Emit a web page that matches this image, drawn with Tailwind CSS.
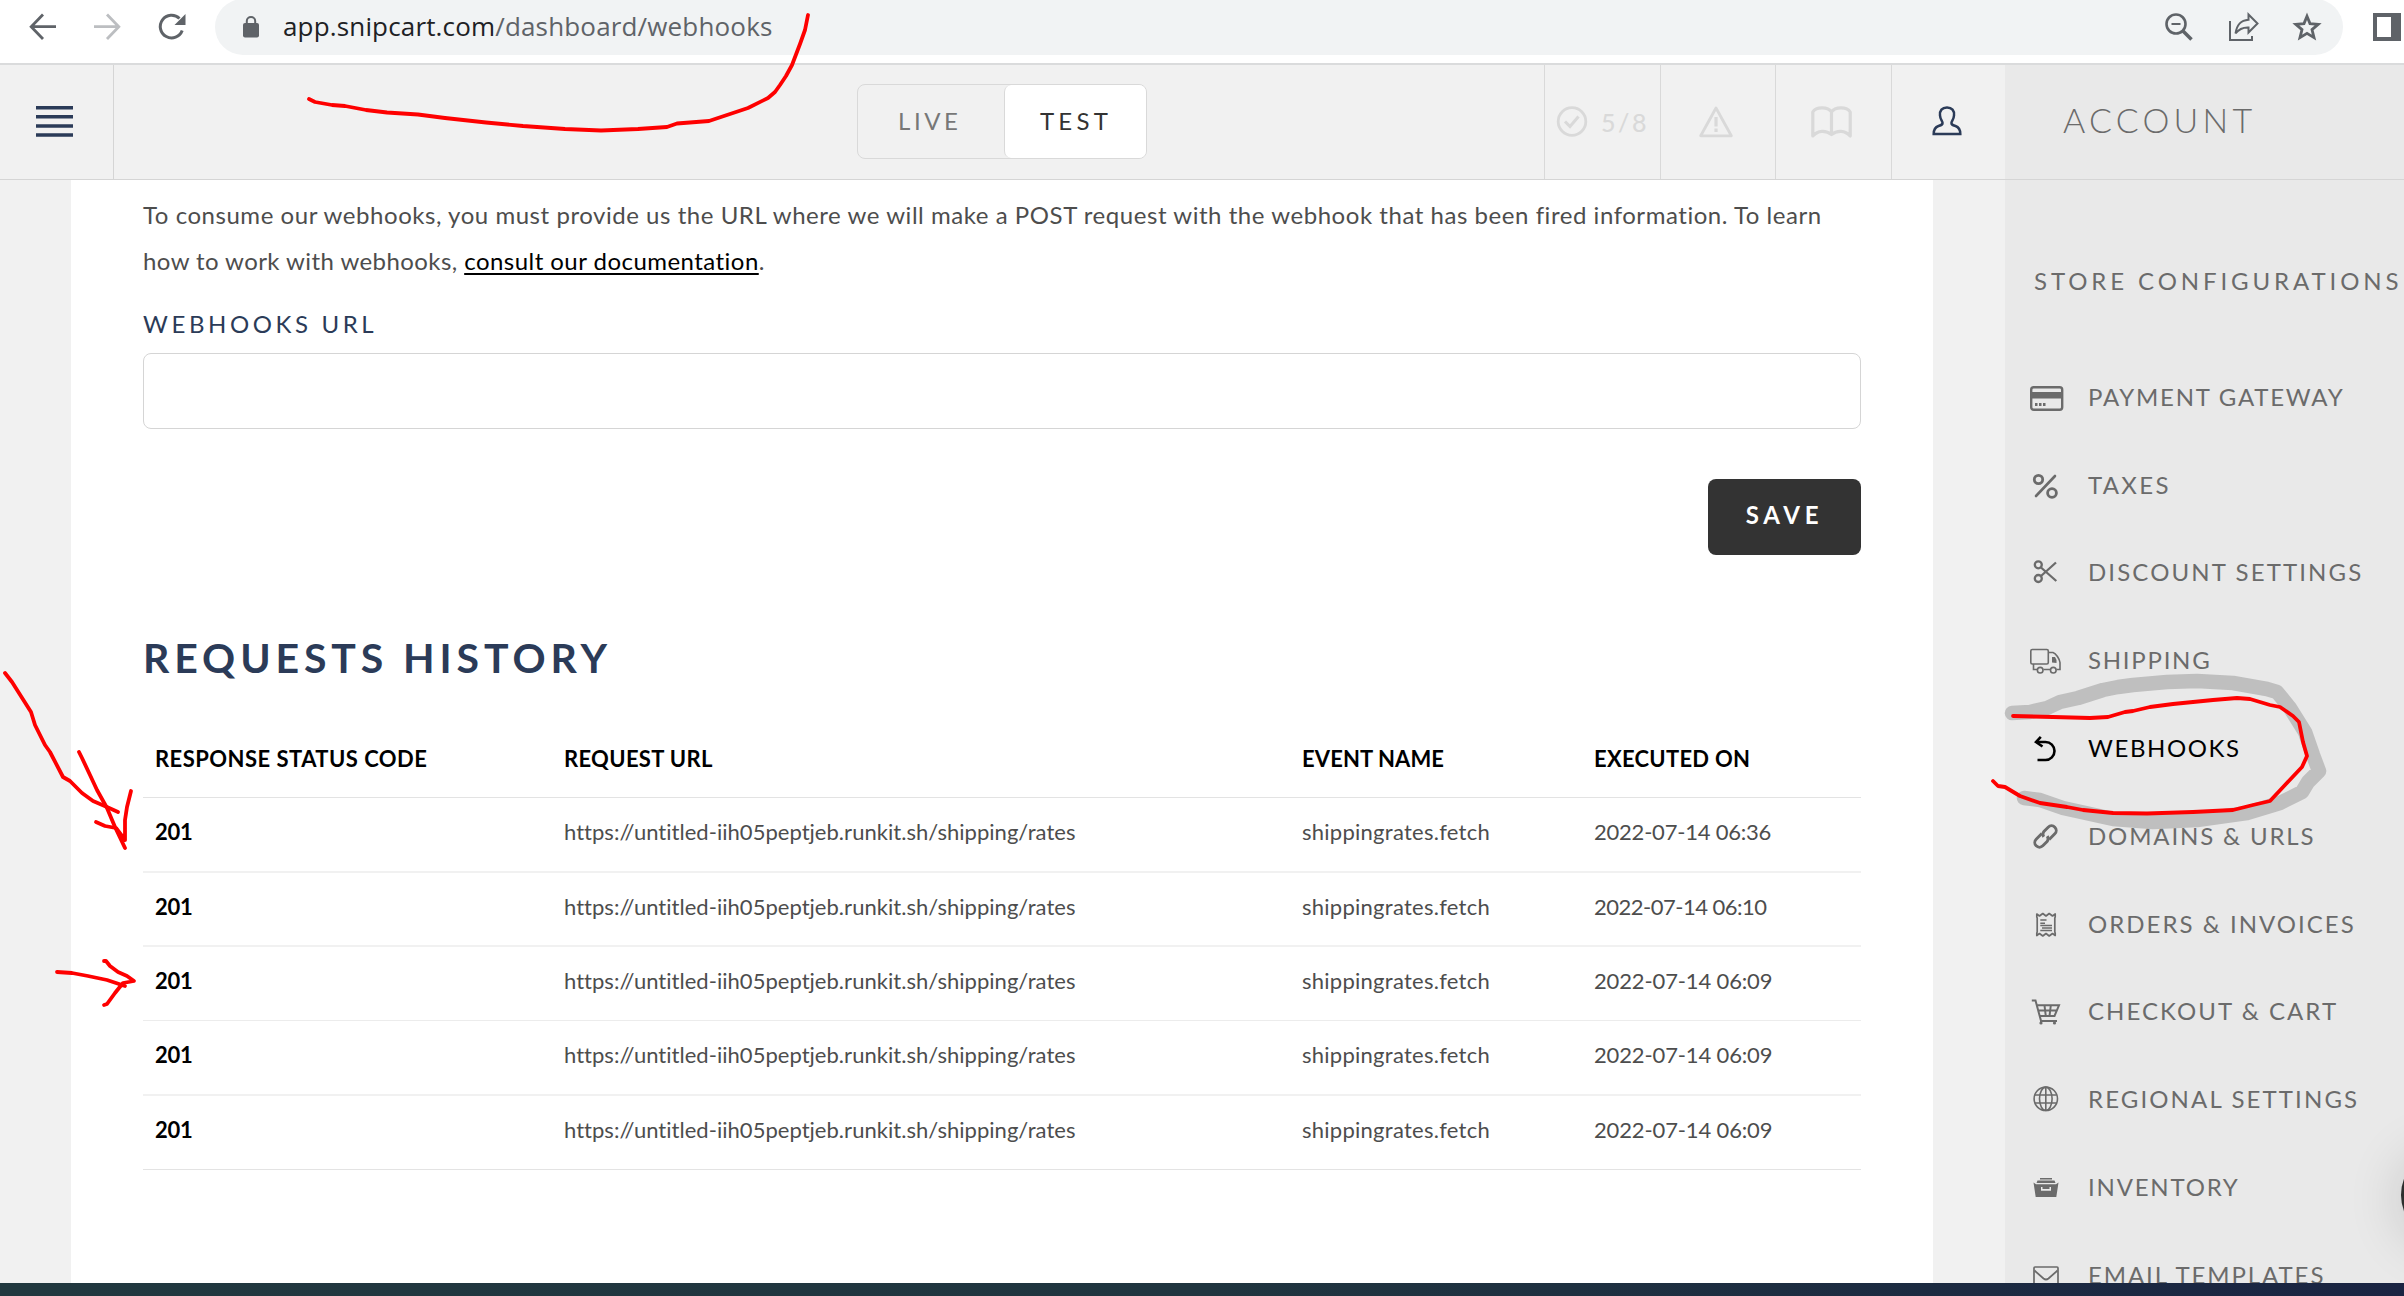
<!DOCTYPE html>
<html lang="en">
<head>
<meta charset="utf-8">
<title>Webhooks</title>
<script src="https://cdn.jsdelivr.net/npm/@tailwindcss/browser@4"></script>
</head>
<body class="relative flex h-[1296px] w-[2404px] flex-col overflow-hidden bg-[#f1f1f1] font-['Lato',sans-serif] text-2xl text-[#4d4d4d]">

<!-- Browser toolbar -->
<div class="flex h-[65px] shrink-0 items-start overflow-hidden border-b-2 border-[#dadbdc] bg-white">
  <svg class="ml-7 mt-3 h-[30px] w-[30px] shrink-0" viewBox="0 0 30 30" fill="none" stroke="#5f6368" stroke-width="2.8"><path d="M28 14.7H4M15 2.500 3.200 14.700 15 27"/></svg>
  <svg class="ml-[34px] mt-3 h-[30px] w-[30px] shrink-0" viewBox="0 0 30 30" fill="none" stroke="#bcbec1" stroke-width="2.8"><path d="M2 14.7H26M15 2.500 26.800 14.700 15 27"/></svg>
  <svg class="ml-[34px] mt-3 h-[30px] w-[32px] shrink-0" viewBox="0 0 32 30" fill="none" stroke="#5f6368" stroke-width="3"><path d="M26.200 18.500A11.300 11.300 0 1 1 23.500 6.500"/><path d="M29.500 2V13H18.500Z" fill="#5f6368" stroke="none"/></svg>
  <div class="-mt-px ml-[27px] flex h-14 w-[2128px] shrink-0 items-center rounded-r-[28px] rounded-l-[28px] bg-[#f1f3f4] pl-7">
    <svg class="h-[22px] w-4 shrink-0" viewBox="0 0 16 22"><rect y="7" width="16" height="14.500" rx="2" fill="#5f6368"/><path d="M3.800 8V5a4.200 4 0 0 1 8.400 0V8" fill="none" stroke="#5f6368" stroke-width="2"/></svg>
    <div class="ml-[24px] pb-px font-['Open_Sans',sans-serif] text-[26px] tracking-[0.16px] whitespace-nowrap text-[#5f6368]"><span class="text-[#202124]">app.snipcart.com</span>/dashboard/webhooks</div>
    <div class="mr-[21px] ml-auto flex items-center">
      <svg class="mr-9 h-7 w-7" viewBox="0 0 28 28" fill="none" stroke="#5f6368" stroke-width="2.6"><circle cx="11" cy="11" r="9.500"/><path d="M18 18 26.500 26.500" stroke-width="3.600"/><path d="M6.500 11H15.500" stroke-width="2"/></svg>
      <svg class="mr-8 h-[30px] w-[31px]" viewBox="0 0 31 30" fill="none" stroke="#5f6368" stroke-width="2"><path d="M1 9V28H23V24"/><path d="M6.500 21.500C8 12 12 8.500 19.500 7.800V2.500L28.500 11.500 19.500 20.500V15.500C13.500 15.200 10 17 6.500 21.500Z"/></svg>
      <svg class="h-[30px] w-[30px]" viewBox="0 0 30 30" fill="none" stroke="#5f6368" stroke-width="2.800"><path d="M15 4.200 18 11.600 26.200 12.300 20 17.600 22 25.600 15 21.300 8 25.600 10 17.600 3.800 12.300 12 11.600Z"/></svg>
    </div>
  </div>
  <svg class="mt-[13px] ml-[30px] h-7 w-7 shrink-0" viewBox="0 0 28 28"><path fill="#5f6368" fill-rule="evenodd" d="M0 0H28V28H0ZM4 4V24H18V4Z"/></svg>
</div>

<!-- Application -->
<div class="flex h-[1218px] shrink-0 overflow-hidden">
  <div class="flex w-[2005px] shrink-0 flex-col">
    <header class="flex h-[115px] shrink-0 border-b border-[#d5d5d5]">
      <div class="flex w-[114px] items-center border-r border-[#d5d5d5] pb-px pl-9">
        <svg class="h-[31px] w-[37px]" viewBox="0 0 37 31" fill="#2b3b58"><path d="M0 0H37V3.500H0ZM0 9H37V12.500H0ZM0 18.200H37V21.700H0ZM0 27.200H37V30.700H0Z"/></svg>
      </div>
      <div class="mt-[19px] ml-[743px] flex h-[75px] w-[290px] rounded-lg border border-[#d9d9d9]">
        <div class="flex w-[146px] items-center pb-0.5 pl-[40px] tracking-[3.6px] text-[#777]">LIVE</div>
        <div class="flex flex-1 items-center rounded-[7px] border-l border-[#d9d9d9] bg-white pb-0.5 pl-[35px] tracking-[4.2px] text-[#333]">TEST</div>
      </div>
      <div class="ml-auto flex text-[#d9d9d9]">
        <div class="flex w-[116px] items-center border-l border-[#d9d9d9] pb-px pl-[11px]">
          <svg class="h-8 w-8" viewBox="0 0 32 32" fill="none" stroke="currentColor" stroke-width="2.800"><circle cx="16" cy="15.500" r="13.800"/><path d="M9 15.500 14 20.500 22.500 10.500" stroke-width="3"/></svg>
          <span class="ml-[13px] pt-[3px] text-[25px] font-medium tracking-[2.6px]">5/8</span>
        </div>
        <div class="flex w-[115px] items-center border-l border-[#d9d9d9] pb-px pl-[38px]">
          <svg class="h-8 w-[34px]" viewBox="0 0 34 32" fill="none" stroke="currentColor" stroke-width="2.800" stroke-linejoin="round"><path d="M17 2 32.300 29.800H1.700Z"/><path d="M17 11V20.500M17 22.500V26" stroke-width="3.200"/></svg>
        </div>
        <div class="flex w-[116px] items-center border-l border-[#d9d9d9] pb-px pl-[35px]">
          <svg class="h-8 w-[41px]" viewBox="0 0 41 32" fill="none" stroke="currentColor" stroke-width="3.200" stroke-linejoin="round"><path d="M20.500 6C17 .5 5 .5 1.800 6V30C7 24 15 24 20.500 28.500 26 24 34 24 39.200 30V6C36 .5 24 .5 20.500 6ZM20.500 6V28"/></svg>
        </div>
        <div class="flex w-[114px] items-center border-l border-[#d9d9d9] pb-[3px] pl-10">
          <svg class="h-[30px] w-[30px]" viewBox="0 0 30 30" fill="none" stroke="#2b3b58" stroke-width="2.500"><path d="M15 1.500C10 1.500 7.500 4.500 8 9.500 8.200 13 10 14.500 10.500 16.500 11 18.500 9.500 19 6.500 20 3 21.200 1.700 23.500 1.700 28H28.300C28.300 23.500 27 21.200 23.500 20 20.500 19 19 18.500 19.500 16.500 20 14.500 21.800 13 22 9.500 22.500 4.500 20 1.500 15 1.500Z"/></svg>
        </div>
      </div>
    </header>

    <main class="mr-[72px] ml-[71px] flex-1 bg-white px-[72px] pt-3">
      <p class="leading-[46px] whitespace-nowrap"><span class="tracking-[0.545px]">To consume our webhooks, you must provide us the URL where we will make a POST request with the webhook that has been fired information. To learn</span><br><span class="tracking-[0.42px]">how to work with webhooks, </span><a class="tracking-[0.46px] text-black underline decoration-2 underline-offset-[3px] [text-decoration-skip-ink:none]">consult our documentation</a>.</p>
      <label class="mt-[17px] block h-[46px] leading-[46px] tracking-[3.6px] text-[#2b3b58]">WEBHOOKS URL</label>
      <div class="mt-1.5 h-[76px] w-[1718px] rounded-lg border border-[#d5d5d5]"></div>
      <div class="mt-[50px] flex w-[1718px] justify-end">
        <button class="h-[76px] w-[153px] rounded-lg bg-[#333] pb-1 font-bold tracking-[4.7px] text-white">SAVE</button>
      </div>
      <h2 class="mt-[78px] h-[50px] text-[41px] leading-[50px] font-bold tracking-[4.9px] text-[#2b3b58]">REQUESTS HISTORY</h2>

      <div class="mt-[37px] w-[1718px] text-[22px] [&>div]:grid [&>div]:grid-cols-[409px_738px_292px_1fr] [&>div]:items-center [&>div]:pl-[12px] [&>div]:whitespace-nowrap">
        <div class="h-[78px] border-b border-[#e3e3e3] font-bold text-black"><span class="tracking-[0.47px]">RESPONSE STATUS CODE</span><span class="tracking-[0.33px]">REQUEST URL</span><span class="tracking-[0.1px]">EVENT NAME</span><span class="tracking-[0.27px]">EXECUTED ON</span></div>
        <div class="h-[75px] border-b-2 border-[#f1f1f1] pb-[5px]"><b class="tracking-[-0.3px] text-black">201</b><span class="tracking-[0.03px]">https://untitled-iih05peptjeb.runkit.sh/shipping/rates</span><span class="tracking-[0.26px]">shippingrates.fetch</span><span class="tracking-[-0.22px]">2022-07-14 06:36</span></div>
        <div class="h-[74px] border-b-2 border-[#f1f1f1] pb-[5px]"><b class="tracking-[-0.3px] text-black">201</b><span class="tracking-[0.03px]">https://untitled-iih05peptjeb.runkit.sh/shipping/rates</span><span class="tracking-[0.26px]">shippingrates.fetch</span><span class="tracking-[-0.5px]">2022-07-14 06:10</span></div>
        <div class="h-[74px] border-b border-[#ececec] pb-[5px]"><b class="tracking-[-0.3px] text-black">201</b><span class="tracking-[0.03px]">https://untitled-iih05peptjeb.runkit.sh/shipping/rates</span><span class="tracking-[0.26px]">shippingrates.fetch</span><span class="tracking-[-0.14px]">2022-07-14 06:09</span></div>
        <div class="h-[75px] border-b-2 border-[#f1f1f1] pb-[5px]"><b class="tracking-[-0.3px] text-black">201</b><span class="tracking-[0.03px]">https://untitled-iih05peptjeb.runkit.sh/shipping/rates</span><span class="tracking-[0.26px]">shippingrates.fetch</span><span class="tracking-[-0.14px]">2022-07-14 06:09</span></div>
        <div class="h-[74px] border-b border-[#e3e3e3] pb-[5px]"><b class="tracking-[-0.3px] text-black">201</b><span class="tracking-[0.03px]">https://untitled-iih05peptjeb.runkit.sh/shipping/rates</span><span class="tracking-[0.26px]">shippingrates.fetch</span><span class="tracking-[-0.14px]">2022-07-14 06:09</span></div>
      </div>
    </main>
  </div>

  <!-- Account panel -->
  <aside class="relative w-[399px] shrink-0 overflow-hidden bg-[#e9e9e9] whitespace-nowrap text-[#6b6b6b]">
    <div class="flex h-[115px] items-center border-b border-[#d5d5d5] pb-1 pl-[58px] text-[34px] font-light tracking-[4.2px]">ACCOUNT</div>
    <div class="mt-[78px] h-[46px] pl-[29px] leading-[46px] tracking-[3.9px]">STORE CONFIGURATIONS</div>
    <nav class="mt-[49px] [&>a]:flex [&>a]:h-[87.8px] [&>a]:items-center [&>a]:pl-[23px] [&_svg]:mr-[24px] [&_svg]:size-9 [&_svg]:shrink-0">
      <a class="tracking-[1.75px]"><svg viewBox="0 0 36 36"><rect x="3.200" y="8.200" width="31" height="22.600" rx="2.500" fill="none" stroke="currentColor" stroke-width="2.400"/><path fill="currentColor" d="M3 13H34.500V19.500H3ZM7 24H9.500V27H7ZM11 24H13.500V27H11ZM15 24H17.500V27H15Z"/></svg>PAYMENT GATEWAY</a>
      <a class="tracking-[2.3px]"><svg viewBox="0 0 36 36" fill="none" stroke="currentColor" stroke-width="2.800"><circle cx="10.500" cy="12.500" r="4.200"/><circle cx="24" cy="26" r="4.400"/><path d="M27 9 8 29" stroke-linecap="round" stroke-width="2.600"/></svg>TAXES</a>
      <a class="tracking-[2.12px]"><svg viewBox="0 0 36 36" fill="none" stroke="currentColor" stroke-width="2.300"><circle cx="10.300" cy="10.800" r="3.500"/><circle cx="10.300" cy="24.500" r="3.500"/><path d="M13 13.500 28.300 27M13 22 28 8.500"/></svg>DISCOUNT SETTINGS</a>
      <a class="tracking-[1.75px]"><svg viewBox="0 0 36 36" fill="none" stroke="currentColor" stroke-width="1.600"><rect x="2.800" y="7.500" width="17.500" height="14.500" rx="1.500"/><path d="M20.500 10.500H25C28 11.500 31.500 17 32 20.500V27.500H28.500M22 27.500H15.500M9 27.500H5.500V22"/><circle cx="12.200" cy="28.200" r="2.800"/><circle cx="25.300" cy="28.200" r="2.800"/><path d="M24 15H27L28.500 18V21L24 20.500Z" fill="currentColor" stroke="none"/></svg>SHIPPING</a>
      <a class="tracking-[1.6px] text-black"><svg viewBox="0 0 36 36" fill="none" stroke="currentColor" stroke-width="2.600"><path d="M9 12H17.500A9 9 0 0 1 17.500 30H9.500"/><path d="M12.800 6.800 8 12 14.500 16.500"/></svg>WEBHOOKS</a>
      <a class="tracking-[1.85px]"><svg viewBox="0 0 36 36" fill="none" stroke="currentColor" stroke-width="2.900"><g transform="rotate(-45 17.500 18.500)"><path d="M17 13.800H9A4.700 4.700 0 0 0 9 23.200H15A4.700 4.700 0 0 0 19 19.500"/><path d="M18 23.200H26A4.700 4.700 0 0 0 26 13.800H20A4.700 4.700 0 0 0 16 17.500"/></g></svg>DOMAINS &amp; URLS</a>
      <a class="tracking-[2.02px]"><svg viewBox="0 0 36 36" fill="none" stroke="currentColor" stroke-width="1.700" stroke-linejoin="round"><path d="M8.800 8 11.500 10 14.800 7.500 18 10 21.200 7.500 24.500 10 27.200 8V11L26.800 12V26L27.200 27V29.500L24.500 27.500 21.200 30 18 27.500 14.800 30 11.500 27.500 8.800 29.500V27L9.200 26V12L8.800 11Z"/><path d="M12.300 14H18.500M12.300 17.300H17M12.300 19.500H24M14 22H24M12.300 24.500H24" stroke-width="1.500"/></svg>ORDERS &amp; INVOICES</a>
      <a class="tracking-[2.05px]"><svg viewBox="0 0 36 36" fill="none" stroke="currentColor" stroke-width="2"><path d="M3.800 7.500H7.500L13 27.800M9 12.300H31L26.500 23H12M10.500 17.500H28.500M16.500 12.500 17.800 23M22.800 12.500 21.500 23M12 28H29"/><circle cx="13" cy="30" r="1.600" fill="currentColor" stroke="none"/><circle cx="26.500" cy="30" r="1.600" fill="currentColor" stroke="none"/></svg>CHECKOUT &amp; CART</a>
      <a class="tracking-[2.12px]"><svg viewBox="0 0 36 36" fill="none" stroke="currentColor" stroke-width="1.600"><circle cx="17.800" cy="17.800" r="11.700"/><ellipse cx="17.800" cy="17.800" rx="6.300" ry="11.700"/><path d="M17.800 6V29.500M7 14H28.500M7 22H28.500"/></svg>REGIONAL SETTINGS</a>
      <a class="tracking-[1.8px]"><svg viewBox="0 0 36 36" fill="currentColor"><path d="M12 9H24V10.500H12ZM9.500 11.500H26.500L27.500 14H8.500Z"/><path fill-rule="evenodd" d="M5.500 13.500 8 15.300H28L30.500 13.500 28.300 28H7.700ZM13 18V21.700H23V18H21.500V20H14.500V18Z"/></svg>INVENTORY</a>
      <a class="tracking-[1.9px]"><svg viewBox="0 0 36 36" fill="none" stroke="currentColor" stroke-width="1.700"><rect x="6" y="10" width="24" height="18" rx="1"/><path d="M6.500 13.500 15.500 21.500Q18 23.500 20.500 21.500L29.500 13.500"/></svg>EMAIL TEMPLATES</a>
    </nav>
    <!-- Chat launcher, mostly beyond the right edge -->
    <div class="absolute top-[1084px] left-[396px] size-[92px] rounded-full bg-[#2d2f2e] shadow-[0_4px_56px_rgba(0,0,0,0.16)]"></div>
  </aside>
</div>

<!-- Desktop taskbar -->
<div class="h-[13px] shrink-0 bg-linear-to-r from-[#21383f] via-[#20353f] to-[#1a2442]"></div>

<!-- Pen annotations -->
<svg class="pointer-events-none absolute top-0 left-0 h-[1296px] w-[2404px]" viewBox="0 0 2404 1296" fill="none" stroke-linecap="round" stroke-linejoin="round">
  <path stroke="#bfbfbf" stroke-width="14.500" d="M2012 713 2030 712 2047 708 2060 702 2078 698 2103 690 2118 687 2133 685 2167 682 2197 681 2233 683 2267 689 2277 692 2290 708 2305 732 2313 755 2319 771 2308 782 2302 792 2280 803 2247 813 2197 820 2153 822 2113 819 2063 808 2040 800 2024 798"/>
  <g stroke="#fe0000" stroke-width="3.800">
    <path d="M309 99 315 102 332 105 345 106 366 110 387 112.500 418 114.500 445 118 486 122.500 523 126 565 129 601 130.500 638 129 667 127 677 123.500 709 121 727 115 748 108 768 98 775 92 780 85 786 76 792 65 800 44 805 30 808 15"/>
    <path d="M5 673 12 682 31 712 35 725 45 745 50 752 63 777 70 781 82 793 93 801 107 807 118 812"/>
    <path d="M79 752 82 758 90 775 97 790 107 808 115 827 125 848"/>
    <path d="M131 791 127 807 125 820 125 840M96 822 105 826 116 828 125 840"/>
    <path d="M57 972 72 973 88 976 107 980 125 986M104 961H106L110 966 118 972 127 976 134 981 123 983 115 993 107 1004 104 1005"/>
    <path d="M2013 716 2053 717 2090 718 2108 717 2125 712 2133 711 2150 707 2173 704 2213 700 2237 698 2250 699 2270 705 2280 707 2293 716 2299 722 2303 742 2307 756 2302 767 2285 785 2270 801 2253 805 2233 810 2213 811 2193 812 2147 813.500 2113 813 2083 810 2067 807 2040 803 2020 796 2005 787 1998 786 1993 781"/>
  </g>
</svg>
</body>
</html>
